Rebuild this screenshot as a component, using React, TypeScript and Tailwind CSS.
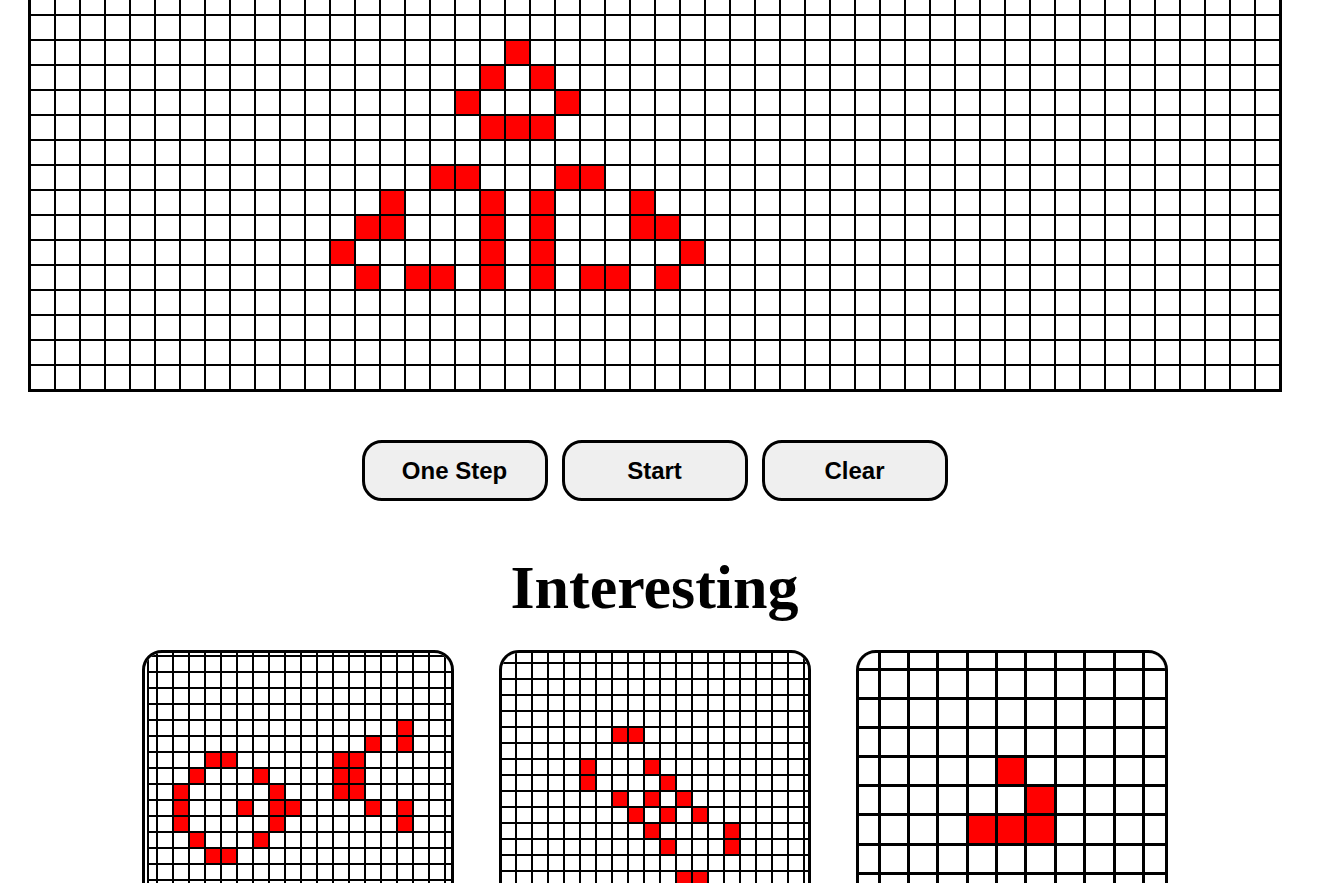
import React from "react";

// main board: visible rows -> live columns
const BOARD: Record<number, number[]> = {
  2: [19],
  3: [18, 20],
  4: [17, 21],
  5: [18, 19, 20],
  7: [16, 17, 21, 22],
  8: [14, 18, 20, 24],
  9: [13, 14, 18, 20, 24, 25],
  10: [12, 18, 20, 26],
  11: [13, 15, 16, 18, 20, 22, 23, 25],
};

const ROWS = 16;
const COLS = 50;

type Preview = {
  cols: number;
  rows: number;
  live: [number, number][];
  gridClass: string;
};

// thumbnails of saved patterns (row, col), first partial row/col is -1
const PREVIEWS: Preview[] = [
  {
    cols: 20,
    rows: 20,
    live: [
      [4, 15], [5, 13], [5, 15],
      [6, 3], [6, 4], [6, 11], [6, 12],
      [7, 2], [7, 6], [7, 11], [7, 12],
      [8, 1], [8, 7], [8, 11], [8, 12],
      [9, 1], [9, 5], [9, 7], [9, 8], [9, 13], [9, 15],
      [10, 1], [10, 7], [10, 15],
      [11, 2], [11, 6],
      [12, 3], [12, 4],
    ],
    gridClass:
      "ml-[2px] pl-[2px] gap-[2px] grid-cols-[7px_repeat(19,14px)] grid-rows-[2px_repeat(19,14px)]",
  },
  {
    cols: 20,
    rows: 20,
    live: [
      [4, 6], [4, 7],
      [6, 4], [6, 8],
      [7, 4], [7, 9],
      [8, 6], [8, 8], [8, 10],
      [9, 7], [9, 9], [9, 11],
      [10, 8], [10, 13],
      [11, 9], [11, 13],
      [13, 10], [13, 11],
    ],
    gridClass:
      "gap-[2px] grid-cols-[13px_repeat(19,14px)] grid-rows-[9px_repeat(19,14px)]",
  },
  {
    cols: 11,
    rows: 12,
    live: [[3, 4], [4, 5], [5, 3], [5, 4], [5, 5]],
    gridClass:
      "gap-[3px] grid-cols-[19px_repeat(10,26.4px)] grid-rows-[15px_repeat(11,26.1px)]",
  },
];

function Board() {
  const cells = [];
  for (let r = 0; r < ROWS; r++) {
    for (let c = 0; c < COLS; c++) {
      const alive = BOARD[r]?.includes(c);
      cells.push(
        <div
          key={`${r}-${c}`}
          className={`w-[25px] h-[25px] border border-black ${alive ? "bg-[#ff0000]" : "bg-white"}`}
        />
      );
    }
  }
  return (
    <div className="ml-[28px] -mt-[12px] w-fit border-2 border-black grid grid-cols-[repeat(50,25px)]">
      {cells}
    </div>
  );
}

function PreviewCard({ p }: { p: Preview }) {
  const live = new Set(p.live.map(([r, c]) => `${r}-${c}`));
  const cells = [];
  for (let r = -1; r < p.rows - 1; r++) {
    for (let c = -1; c < p.cols - 1; c++) {
      cells.push(
        <div
          key={`${r}-${c}`}
          className={live.has(`${r}-${c}`) ? "bg-[#ff0000]" : "bg-white"}
        />
      );
    }
  }
  return (
    <button className="w-[312px] h-[312px] shrink-0 border-[3px] border-black rounded-[20px] overflow-hidden bg-white text-left">
      <div className={`grid bg-black w-max ${p.gridClass}`}>{cells}</div>
    </button>
  );
}

export default function App() {
  return (
    <div className="h-[883px] overflow-hidden bg-white">
      <div className="w-[1309px]">
        <Board />

        <div className="flex justify-center gap-[14px] mt-[48px]">
          {["One Step", "Start", "Clear"].map((label) => (
            <button
              key={label}
              className="w-[186px] h-[61px] rounded-[20px] border-[3px] border-black bg-[#efefef] text-black text-[24px] font-bold font-['Liberation_Sans',Arial,sans-serif]"
            >
              {label}
            </button>
          ))}
        </div>

        <h1 className="mt-[55px] text-center text-black text-[62px] leading-[62px] font-bold font-['Liberation_Serif','Times_New_Roman',serif]">
          Interesting
        </h1>

        <div className="flex justify-center gap-[45px] mt-[32px]">
          {PREVIEWS.map((p, i) => (
            <PreviewCard key={i} p={p} />
          ))}
        </div>
      </div>
    </div>
  );
}
